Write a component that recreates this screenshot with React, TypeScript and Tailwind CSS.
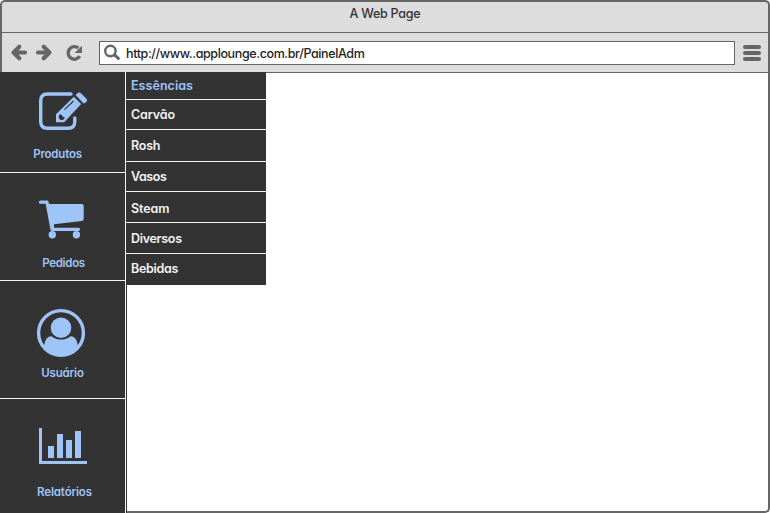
import type { ReactNode } from "react";

type NavItem = { label: string; box: string; icon: ReactNode; text: string };

const navItems: NavItem[] = [
  {
    label: "Produtos",
    box: "h-[101px] border-b pt-[17px]",
    text: "top-[11px] left-[-5px] tracking-[-0.2px]",
    icon: (
      <svg viewBox="36 89 54 46" className="h-[46px] w-[54px]" fill="#9fc5f8">
        <path d="M71 94 H47.5 Q40.7 94 40.7 100.8 V121.5 Q40.7 128.3 47.5 128.3 H68 Q74.8 128.3 74.8 121.5 V118" fill="none" stroke="#9fc5f8" strokeWidth="3.4" strokeLinecap="round" />
        <path d="M73.8 96.7 L81.2 104.1 L64.2 122.3 H56 V114.3 Z" />
        <path d="M75.9 95 L77.6 93.4 Q79.2 92 80.9 93.5 L86 98.6 Q87.6 100.4 86.1 101.9 L83.6 103.2 Z" stroke="#9fc5f8" strokeWidth=".6" />
        <path d="M64.5 109.6 L73.5 101" stroke="#333" strokeWidth="1.1" />
        <path d="M59 114.8 L61.5 114.6 L62.6 116.5 L65 117.5 L63 120 L60.5 120 L58.7 118 Z" fill="#333" />
      </svg>
    ),
  },
  {
    label: "Pedidos",
    box: "h-[108px] border-b pt-[24px]",
    text: "top-[6px] left-[1px] tracking-[-0.3px]",
    icon: (
      <svg viewBox="36 197 54 52" className="h-[52px] w-[54px]" fill="#9fc5f8">
        <path d="M40.5 202.2 H47 L52 229.3 H78.5" fill="none" stroke="#9fc5f8" strokeWidth="3.2" strokeLinecap="round" strokeLinejoin="round" />
        <path d="M47 204 H82 Q83.7 204 83.7 205.7 V219 Q83.7 220.7 82 221 L54 224.3 V228 H50.8 Z" />
        <circle cx="52.3" cy="234.7" r="3.7" />
        <circle cx="76.4" cy="234.7" r="3.7" />
      </svg>
    ),
  },
  {
    label: "Usuário",
    box: "h-[118px] border-b pt-[25px]",
    text: "top-[5px] tracking-[-0.15px]",
    icon: (
      <svg viewBox="34 306 54 54" className="relative left-[-2px] h-[54px] w-[54px]" fill="#9fc5f8">
        <circle cx="61" cy="333" r="22.4" fill="none" stroke="#9fc5f8" strokeWidth="3.4" />
        <circle cx="61" cy="327.8" r="10.3" />
        <path d="M44.2 345 Q45.5 336.2 51.5 336.2 Q55.5 339.6 61 339.6 Q66.5 339.6 70.5 336.2 Q76.5 336.2 77.8 345 L76 350 Q70 356 61 356 Q52 356 46 350 Z" />
      </svg>
    ),
  },
  {
    label: "Relatórios",
    box: "h-[114px] pt-[26px]",
    text: "top-[14px] left-[2px] tracking-[-0.15px]",
    icon: (
      <svg viewBox="36 425 54 45" className="h-[45px] w-[54px]" fill="#9fc5f8">
        <path d="M39 428 H42 V461 H87 V464 H39 Z" />
        <path d="M48 446 H54 V458 H48 Z M57 434 H63 V458 H57 Z M66 440 H72 V458 H66 Z M75 431 H81 V458 H75 Z" />
      </svg>
    ),
  },
];

const menuItems = [
  { label: "Essências", style: "h-7 border-b pt-[2px] text-[#9fc5f8] tracking-[0.05px]" },
  { label: "Carvão", style: "h-[30px] border-b pt-[2px] text-[#f3f3f3] tracking-[-0.1px]" },
  { label: "Rosh", style: "h-8 border-b pt-[2px] text-[#f3f3f3] tracking-[-0.2px]" },
  { label: "Vasos", style: "h-[30px] border-b pt-[2px] text-[#f3f3f3] tracking-[-0.4px]" },
  { label: "Steam", style: "h-[31px] border-b pt-[5px] text-[#f3f3f3] tracking-[-0.1px]" },
  { label: "Diversos", style: "h-[31px] border-b pt-[2px] text-[#f3f3f3] tracking-[-0.3px]" },
  { label: "Bebidas", style: "h-[31px] text-[#f3f3f3] tracking-[-0.3px]" },
];

function BrowserHeader() {
  return (
    <header className="h-[72px] shrink-0 rounded-t-[5px] border-x-2 border-t-2 border-[#666] bg-[#ddd]">
      <div className="h-[31px] border-b border-[#666] pt-[3px] text-center text-[12.5px] leading-[18px] font-medium tracking-[-0.25px] text-[#333]">
        A Web Page
      </div>
      <div className="flex h-[39px] items-start">
        <svg viewBox="2 33 97 39" className="h-[39px] w-[97px] shrink-0" fill="none" stroke="#666" strokeWidth="4.2">
          <path d="M19.3 46.8 L13.5 52.5 L19.3 58.2 M14 52.5 H25" strokeLinecap="round" strokeLinejoin="round" />
          <path d="M43.7 46.8 L49.5 52.5 L43.7 58.2 M49 52.5 H38" strokeLinecap="round" strokeLinejoin="round" />
          <path d="M79.8 56.2 A6.3 6.3 0 1 1 78.4 48" strokeWidth="3.4" />
          <path d="M82 45.7 V53 H74.7 Z" fill="#666" stroke="none" />
        </svg>
        <div className="mt-2 flex h-6 w-[636px] border border-[#666] bg-white">
          <svg viewBox="100 42 24 22" className="h-[22px] w-[24px] shrink-0" fill="none" stroke="#666">
            <circle cx="110.4" cy="51" r="5.2" strokeWidth="2.4" />
            <path d="M114.5 54.9 L118.3 58.4" strokeWidth="3.2" strokeLinecap="round" />
          </svg>
          <span className="pl-[2px] pt-px text-[12.5px] leading-[22px] font-medium tracking-[-0.38px] whitespace-pre text-[#222]">
            http://www..applounge.com.br/PainelAdm
          </span>
        </div>
        <div className="mt-3 ml-2 flex w-[18px] flex-col gap-[2px]">
          <i className="h-1 rounded-sm bg-[#666]" />
          <i className="h-1 rounded-sm bg-[#666]" />
          <i className="h-1 rounded-sm bg-[#666]" />
        </div>
      </div>
    </header>
  );
}

export default function App() {
  return (
    <div className="flex h-[513px] w-[770px] flex-col bg-white font-['Inter','Liberation_Sans',sans-serif] [font-feature-settings:'cv11']">
      <BrowserHeader />
      <div className="flex h-[441px]">
        <nav className="flex w-[126px] shrink-0 flex-col border-r border-[#f3f3f3] bg-[#333]">
          {navItems.map((item) => (
            <div key={item.label} className={`flex flex-col items-center border-[#f3f3f3] ${item.box}`}>
              {item.icon}
              <span className={`relative text-[11.5px] leading-4 font-semibold text-[#9fc5f8] ${item.text}`}>{item.label}</span>
            </div>
          ))}
        </nav>
        <div className="w-px shrink-0 bg-[#333]" />
        <main className="flex grow items-start rounded-br-[5px] border-r-2 border-b-2 border-[#666]">
          <ul className="-ml-px h-[213px] w-[140px] bg-[#333]">
            {menuItems.map((item) => (
              <li key={item.label} className={`flex items-center border-[#f3f3f3] pl-[5px] text-[12.5px] font-semibold ${item.style}`}>
                {item.label}
              </li>
            ))}
          </ul>
          <div className="h-px grow bg-[#666]" />
        </main>
      </div>
    </div>
  );
}
